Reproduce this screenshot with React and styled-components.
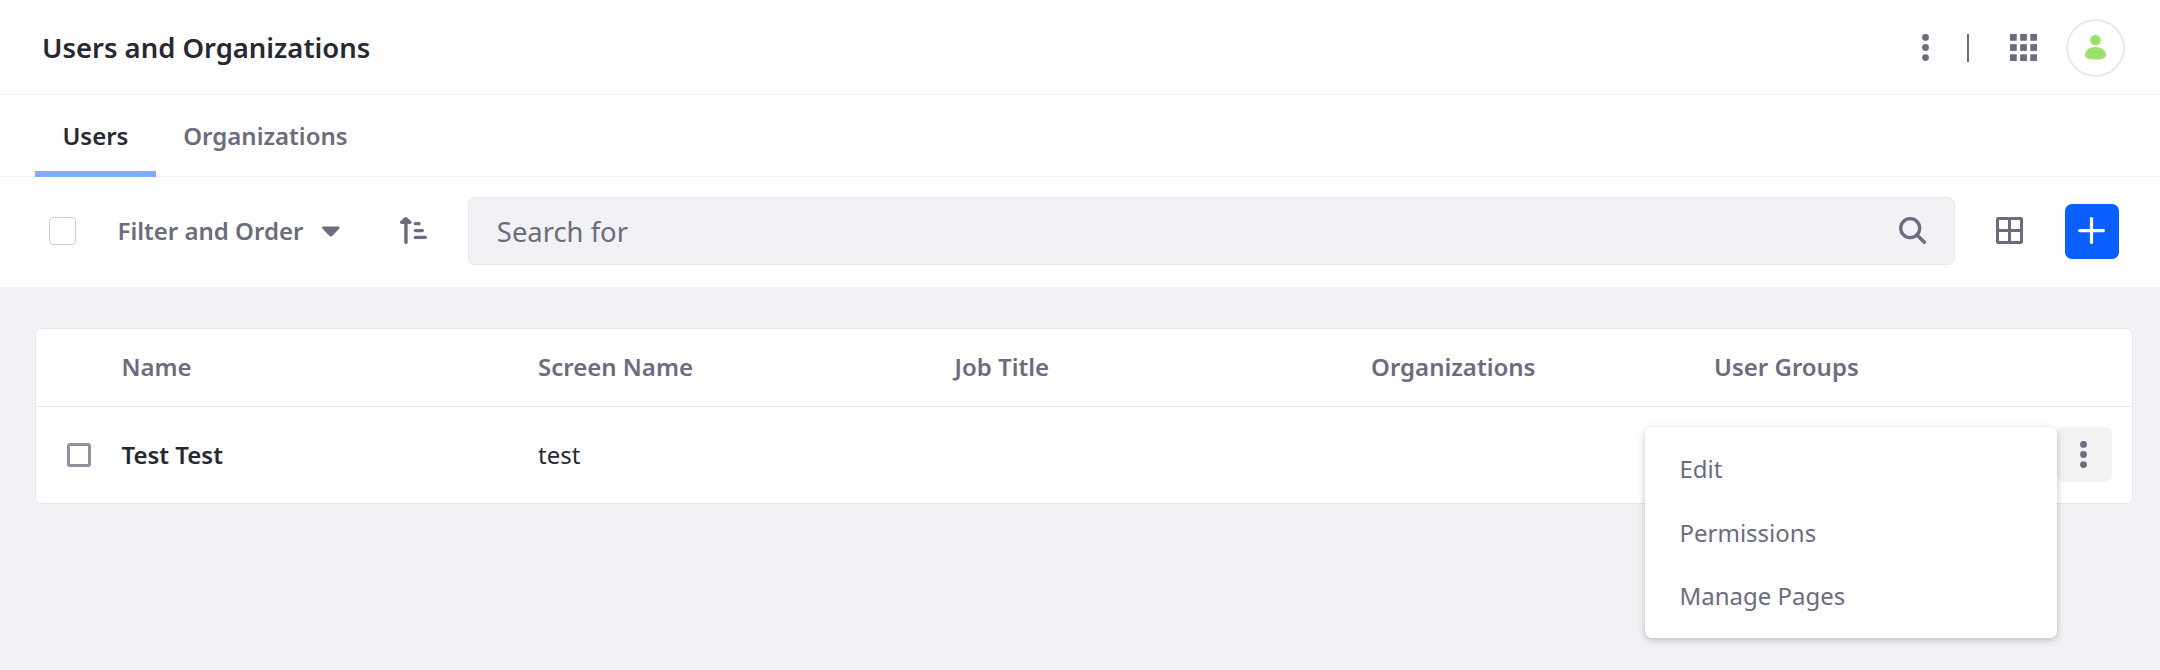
import React from "react";
import styled, { createGlobalStyle, css } from "styled-components";

const GlobalStyle = createGlobalStyle`
  *, *::before, *::after { box-sizing: border-box; }
  body {
    margin: 0;
    background: #f1f2f5;
    color: #272833;
    font-family: "Noto Sans", "Open Sans", sans-serif;
    font-size: 24px;
    line-height: 36px;
  }
  button, input { font: inherit; color: inherit; }
`;

const Page = styled.div`
  min-height: 670px;
`;

const Header = styled.header`
  display: flex;
  align-items: center;
  height: 95px;
  padding: 0 35px 0 42px;
  background: #fff;
  border-bottom: 1px solid #f1f2f5;
`;

const Title = styled.h1`
  flex: 1;
  margin: 0;
  padding-top: 1px;
  font-size: 27.43px;
  font-weight: 600;
  line-height: 40px;
`;

const IconButton = styled.button`
  display: inline-flex;
  flex: none;
  align-items: center;
  justify-content: center;
  width: 55px;
  height: 55px;
  padding: 0;
  border: 0;
  border-radius: 7px;
  background: transparent;
  color: #6b6c7e;
`;

const RowActionButton = styled(IconButton)`
  padding-right: 2px;
  background: #f2f2f2;
`;

const PrimaryButton = styled(IconButton)`
  width: 54px;
  padding: 0 1px 1px 0;
  background: #0b5fff;
  color: #fff;
`;

const ToolbarIconButton = styled(IconButton)`
  padding-bottom: 2px;
`;

const Divider = styled.span`
  width: 2px;
  height: 28px;
  margin: 2px 27px 0 14px;
  background: #6b6c7e;
`;

const Avatar = styled.span`
  display: flex;
  align-items: center;
  justify-content: center;
  width: 59px;
  height: 58px;
  margin: 1px 0 0 15px;
  border: 2px solid #e7e7ed;
  border-radius: 50%;
  color: #9be169;
`;

const Tabs = styled.nav`
  display: flex;
  height: 82px;
  padding-left: 35px;
  background: #fff;
  box-shadow: inset 0 -1px #f1f2f5;
`;

const Tab = styled.a`
  padding: 23px 27.4px 0;
  color: #6b6c7e;
  font-weight: 600;
  ${(p) =>
    p.$active &&
    css`
      color: #272833;
      box-shadow: inset 0 -6px #80acff;
    `}
`;

const Toolbar = styled.div`
  display: flex;
  align-items: center;
  height: 110px;
  padding: 0 41px 2px 49px;
  background: #fff;
`;

const Checkbox = styled.input`
  flex: none;
  appearance: none;
  width: ${(p) => (p.$strong ? 24 : 27)}px;
  height: ${(p) => (p.$strong ? 24 : 28)}px;
  margin: 0;
  border: ${(p) => (p.$strong ? "3px solid #9190a0" : "1px solid #cdced9")};
  border-radius: ${(p) => (p.$strong ? 3 : 4)}px;
  background: #fff;
`;

const FilterButton = styled.button`
  display: flex;
  align-items: center;
  gap: 18.5px;
  margin-left: 41.5px;
  padding: 0;
  border: 0;
  background: transparent;
  color: #6b6c7e;
  font-weight: 600;
`;

const SortSlot = styled.span`
  display: flex;
  margin: 0 27px 0 46px;
`;

const SearchField = styled.label`
  display: flex;
  flex: 1;
  align-items: center;
  height: 68px;
  margin-right: 27px;
  padding: 0 14px 0 28px;
  border: 1px solid #e7e7ed;
  border-radius: 7px;
  background: #f1f2f5;
`;

const SearchInput = styled.input`
  flex: 1;
  height: 40px;
  padding: 0;
  border: 0;
  outline: 0;
  background: transparent;
  font-size: 27.4px;
  &::placeholder { color: #6b6c7e; opacity: 1; }
`;

const PrimaryActions = styled.span`
  display: flex;
  gap: 28px;
`;

const Content = styled.main`
  padding: 41px 27px 0 35px;
`;

const Card = styled.div`
  height: 176px;
  border: 1px solid #e7e7ed;
  border-radius: 7px;
  background: #fff;
`;

const Row = styled.div`
  display: grid;
  grid-template-columns: 85.5px 416.5px 416.5px 416.5px 343px 1fr;
  align-items: center;
  height: ${(p) => (p.$head ? 78 : 96)}px;
  padding-bottom: 1px;
  border-bottom: ${(p) => (p.$head ? "1px solid #e7e7ed" : "0")};
`;

const Cell = styled.span`
  display: block;
  color: ${(p) => (p.$head ? "#6b6c7e" : "#272833")};
  font-weight: ${(p) => (p.$head || p.$bold ? 600 : 400)};
`;

const CheckCell = styled.span`
  display: flex;
  padding: 1px 0 0 31px;
`;

const Actions = styled.span`
  position: relative;
  display: flex;
  justify-content: flex-end;
  padding-right: 20px;
`;

const Menu = styled.ul`
  position: absolute;
  top: 0;
  right: 75px;
  z-index: 1;
  width: 412px;
  height: 211px;
  margin: 0;
  padding: 10px 0;
  border-radius: 7px;
  background: #fff;
  box-shadow: 0 2px 7px rgba(39, 40, 51, 0.28);
  list-style: none;
`;

const MenuItem = styled.li`
  height: 63.5px;
  padding: 14px 34.5px;
  color: #6b6c7e;
`;

const Svg = ({ w = 27, h = 27, children }) => (
  <svg width={w} height={h} viewBox={`0 0 ${w} ${h}`} fill="currentColor" display="block">
    {children}
  </svg>
);

const DotsIcon = () => (
  <Svg>
    <circle cx="13.5" cy="3.4" r="3.4" />
    <circle cx="13.5" cy="13.5" r="3.4" />
    <circle cx="13.5" cy="23.6" r="3.4" />
  </Svg>
);

const AppsIcon = () => (
  <Svg>
    {[0, 10.15, 20.3].map((y) =>
      [0, 10.15, 20.3].map((x) => <rect key={`${x}-${y}`} x={x} y={y} width="6.75" height="6.75" />)
    )}
  </Svg>
);

const UserIcon = () => (
  <Svg w={21} h={25}>
    <circle cx="10.5" cy="5.3" r="5.3" />
    <path d="M10.5 12C4 12 0 16 0 20c0 3.3 4.4 4.6 10.5 4.6S21 23.3 21 20c0-4-4-8-10.5-8z" />
  </Svg>
);

const CaretIcon = () => (
  <Svg w={18} h={11}>
    <path d="M1.5 0.5h14.6c1.5 0 1.9 1.2 1 2.2l-7 7.2a1.7 1.7 0 0 1-2.5 0l-7-7.2c-1-1-.6-2.2.9-2.2z" />
  </Svg>
);

const SortIcon = () => (
  <Svg>
    <path d="M4.2 25.3V7H2C0 7 -.6 5 .6 3.9L4.5.5a1.9 1.9 0 0 1 2.5 0l4 3.4C12.2 5 11.6 7 9.6 7H7.7v18.3a1.75 1.75 0 0 1-3.5 0z" />
    <rect x="13.7" y="5.1" width="7" height="3.2" rx="1.6" />
    <rect x="13.7" y="11.9" width="10.3" height="3.3" rx="1.6" />
    <rect x="13.7" y="18.7" width="13.3" height="3.3" rx="1.6" />
  </Svg>
);

const SearchIcon = () => (
  <Svg>
    <circle cx="11.2" cy="11.2" r="9.5" fill="none" stroke="currentColor" strokeWidth="3.3" />
    <path d="M18 18l7.4 7.3" fill="none" stroke="currentColor" strokeWidth="3.4" strokeLinecap="round" />
  </Svg>
);

const TableIcon = () => (
  <Svg>
    <path
      fillRule="evenodd"
      d="M2 0h23a2 2 0 0 1 2 2v23a2 2 0 0 1-2 2H2a2 2 0 0 1-2-2V2a2 2 0 0 1 2-2zM3 3v9h9V3zM15 3v9h9V3zM3 15v9h9v-9zM15 15v9h9v-9z"
    />
  </Svg>
);

const PlusIcon = () => (
  <Svg>
    <rect x="0" y="12" width="27" height="3.2" rx="1.6" />
    <rect x="11.9" y="0" width="3.2" height="27" rx="1.6" />
  </Svg>
);

const headings = ["Name", "Screen Name", "Job Title", "Organizations", "User Groups"];
const menuItems = ["Edit", "Permissions", "Manage Pages"];

export default function App() {
  return (
    <>
      <GlobalStyle />
      <Page>
        <Header>
          <Title>Users and Organizations</Title>
          <IconButton aria-label="Options"><DotsIcon /></IconButton>
          <Divider />
          <IconButton aria-label="Applications"><AppsIcon /></IconButton>
          <Avatar><UserIcon /></Avatar>
        </Header>
        <Tabs>
          <Tab $active>Users</Tab>
          <Tab>Organizations</Tab>
        </Tabs>
        <Toolbar>
          <Checkbox type="checkbox" aria-label="Select all" />
          <FilterButton>Filter and Order<CaretIcon /></FilterButton>
          <SortSlot><ToolbarIconButton aria-label="Sort"><SortIcon /></ToolbarIconButton></SortSlot>
          <SearchField>
            <SearchInput placeholder="Search for" />
            <ToolbarIconButton aria-label="Search"><SearchIcon /></ToolbarIconButton>
          </SearchField>
          <PrimaryActions>
            <ToolbarIconButton aria-label="Display style"><TableIcon /></ToolbarIconButton>
            <PrimaryButton aria-label="Add"><PlusIcon /></PrimaryButton>
          </PrimaryActions>
        </Toolbar>
        <Content>
          <Card>
            <Row $head>
              <span />
              {headings.map((h) => <Cell key={h} $head>{h}</Cell>)}
            </Row>
            <Row>
              <CheckCell><Checkbox $strong type="checkbox" aria-label="Select Test Test" /></CheckCell>
              <Cell $bold>Test Test</Cell>
              <Cell>test</Cell>
              <Cell />
              <Cell />
              <Actions>
                <RowActionButton aria-label="Row actions"><DotsIcon /></RowActionButton>
                <Menu>
                  {menuItems.map((m) => <MenuItem key={m}>{m}</MenuItem>)}
                </Menu>
              </Actions>
            </Row>
          </Card>
        </Content>
      </Page>
    </>
  );
}
